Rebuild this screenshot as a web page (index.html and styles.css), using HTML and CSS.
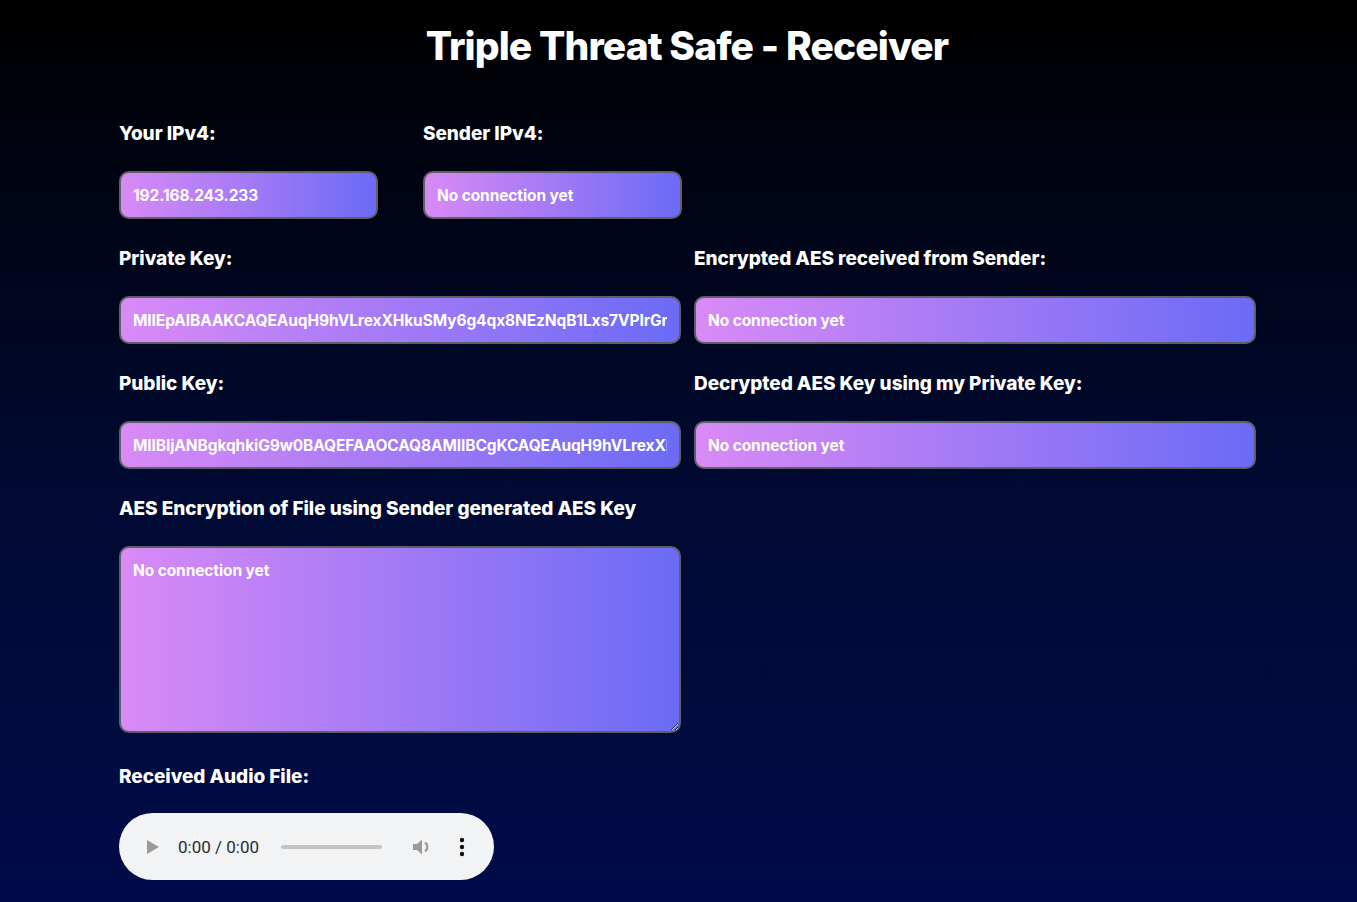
FILE: index.html
```html
<!DOCTYPE html>
<html lang="en">
<head>
<meta charset="utf-8">
<title>Triple Threat Safe - Receiver</title>
<link rel="stylesheet" href="styles.css">
</head>
<body>
<main class="page">
  <h1 class="title">Triple Threat Safe - Receiver</h1>

  <div class="row row-small">
    <div class="field">
      <label class="label">Your IPv4:</label>
      <input class="box" type="text" readonly value="192.168.243.233">
    </div>
    <div class="field">
      <label class="label">Sender IPv4:</label>
      <input class="box" type="text" readonly value="No connection yet">
    </div>
  </div>

  <div class="row row-wide">
    <div class="field">
      <label class="label">Private Key:</label>
      <input class="box" type="text" readonly value="MIIEpAIBAAKCAQEAuqH9hVLrexXHkuSMy6g4qx8NEzNqB1Lxs7VPIrGm2ZJ8kQeT5yH0uW3nR4vLpA9sD">
    </div>
    <div class="field">
      <label class="label">Encrypted AES received from Sender:</label>
      <input class="box" type="text" readonly value="No connection yet">
    </div>
  </div>

  <div class="row row-wide">
    <div class="field">
      <label class="label">Public Key:</label>
      <input class="box" type="text" readonly value="MIIBIjANBgkqhkiG9w0BAQEFAAOCAQ8AMIIBCgKCAQEAuqH9hVLrexXHkuSMy6g4qx8NEzNqB1Lxs7VPIr">
    </div>
    <div class="field">
      <label class="label">Decrypted AES Key using my Private Key:</label>
      <input class="box" type="text" readonly value="No connection yet">
    </div>
  </div>

  <div class="row row-wide">
    <div class="field">
      <label class="label">AES Encryption of File using Sender generated AES Key</label>
      <textarea class="box area" readonly>No connection yet</textarea>
    </div>
  </div>

  <div class="audio-block">
    <label class="label">Received Audio File:</label>
    <div class="player">
      <svg class="play" width="14" height="16" viewBox="0 0 14 16"><path d="M1 1 L13 8 L1 15 Z" fill="#9a9a9a"/></svg>
      <span class="time">0:00 / 0:00</span>
      <span class="track"></span>
      <svg class="vol" width="22" height="20" viewBox="0 0 22 20"><path d="M1 7 H5 L10 2.5 V17.5 L5 13 H1 Z" fill="#9a9a9a"/><path d="M13 5.5 A5.5 5.5 0 0 1 13 14.5" stroke="#9a9a9a" stroke-width="2.2" fill="none"/></svg>
      <svg class="more" width="6" height="20" viewBox="0 0 6 20"><circle cx="3" cy="3" r="2.2" fill="#111"/><circle cx="3" cy="10" r="2.2" fill="#111"/><circle cx="3" cy="17" r="2.2" fill="#111"/></svg>
    </div>
  </div>
</main>
</body>
</html>
```
FILE: styles.css
```css
html, body {
  margin: 0;
  padding: 0;
}
body {
  min-height: 902px;
  background: linear-gradient(to bottom, #000000 0%, #010a33 55%, #000c4a 100%);
  font-family: "Inter", "Lato", "Noto Sans", sans-serif;
  color: #ffffff;
}
.page {
  padding: 0 0 0 119px;
  box-sizing: border-box;
  width: 1357px;
  height: 902px;
  overflow: hidden;
}
.title {
  margin: 0 0 51px -119px;
  padding: 22px 0 0 17px;
  text-align: center;
  font-size: 39px;
  line-height: 48px;
  font-weight: 800;
  letter-spacing: -0.9px;
}
.row {
  display: flex;
}
.row-small {
  gap: 45px;
}
.row-small .field {
  width: 259px;
}
.row-wide {
  gap: 13px;
}
.row-wide .field {
  width: 562px;
}
.field {
  display: flex;
  flex-direction: column;
}
.label {
  display: block;
  font-size: 19px;
  line-height: 24px;
  padding-top: 1px;
  font-weight: 800;
  letter-spacing: -0.05px;
  margin-bottom: 25px;
}
.box {
  box-sizing: border-box;
  width: 100%;
  height: 48px;
  margin: 0 0 27px 0;
  padding: 1px 12px 0 12px;
  border: 2px solid #5f5f66;
  border-radius: 10px;
  background: linear-gradient(to right, #d98af5 0%, #ad7df5 40%, #6b6bf5 100%);
  color: #ffffff;
  font-family: "Inter", "Lato", "Noto Sans", sans-serif;
  font-size: 15.5px;
  font-weight: 700;
  letter-spacing: -0.1px;
  outline: none;
}
.area {
  display: block;
  height: 187px;
  margin-bottom: 31px;
  padding: 12px 12px;
  resize: vertical;
  line-height: 22px;
}
.audio-block .label {
  margin-bottom: 24px;
}
.player {
  box-sizing: border-box;
  width: 375px;
  height: 67px;
  border-radius: 34px;
  background: #f1f3f4;
  display: flex;
  align-items: center;
  padding: 0 0 0 27px;
}
.play {
  margin-right: 18px;
}
.time {
  font-family: "Roboto", "Liberation Sans", sans-serif;
  font-size: 17px;
  color: #2b2b2b;
  margin-right: 22px;
}
.track {
  width: 101px;
  height: 4px;
  border-radius: 2px;
  background: #c4c4c4;
  margin-right: 30px;
}
.vol {
  margin-right: 25px;
}
```
